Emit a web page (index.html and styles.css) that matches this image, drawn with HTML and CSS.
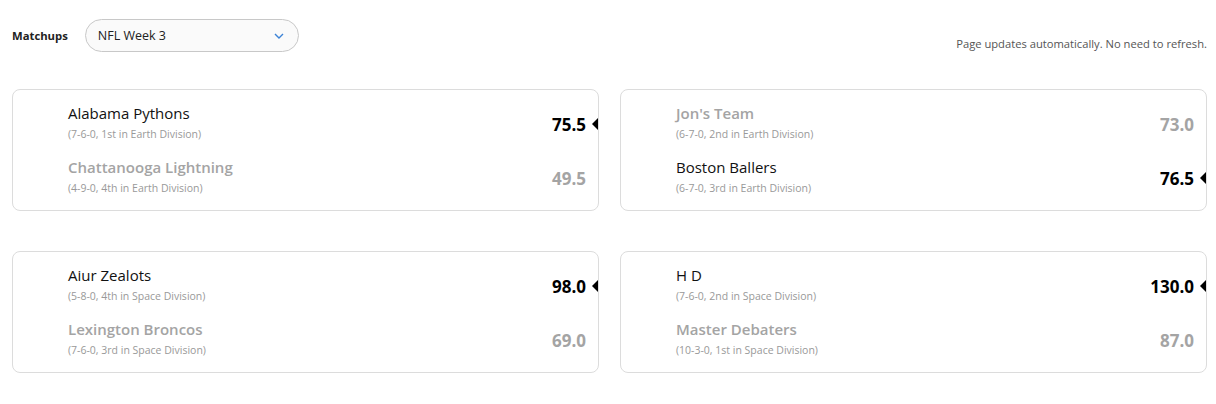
FILE: index.html
```html
<!DOCTYPE html>
<html>
<head>
<meta charset="utf-8">
<link rel="stylesheet" href="styles.css">
</head>
<body>
<div class="page">
  <div class="header">
    <div class="picker">
      <span class="label">Matchups</span>
      <div class="select">
        <span>NFL Week 3</span>
        <svg class="chev" width="10" height="6" viewBox="0 0 10 6"><path d="M1 1 L5 5 L9 1" fill="none" stroke="#3b82d6" stroke-width="1.4"/></svg>
      </div>
    </div>
    <div class="notice">Page updates automatically. No need to refresh.</div>
  </div>
  <div class="grid">
    <div class="card">
      <div class="team win">
        <div class="info"><div class="name">Alabama Pythons</div><div class="rec">(7-6-0, 1st in Earth Division)</div></div>
        <div class="score">75.5</div><div class="arrow"></div>
      </div>
      <div class="team">
        <div class="info"><div class="name">Chattanooga Lightning</div><div class="rec">(4-9-0, 4th in Earth Division)</div></div>
        <div class="score">49.5</div><div class="arrow"></div>
      </div>
    </div>
    <div class="card">
      <div class="team">
        <div class="info"><div class="name">Jon's Team</div><div class="rec">(6-7-0, 2nd in Earth Division)</div></div>
        <div class="score">73.0</div><div class="arrow"></div>
      </div>
      <div class="team win">
        <div class="info"><div class="name">Boston Ballers</div><div class="rec">(6-7-0, 3rd in Earth Division)</div></div>
        <div class="score">76.5</div><div class="arrow"></div>
      </div>
    </div>
    <div class="card">
      <div class="team win">
        <div class="info"><div class="name">Aiur Zealots</div><div class="rec">(5-8-0, 4th in Space Division)</div></div>
        <div class="score">98.0</div><div class="arrow"></div>
      </div>
      <div class="team">
        <div class="info"><div class="name">Lexington Broncos</div><div class="rec">(7-6-0, 3rd in Space Division)</div></div>
        <div class="score">69.0</div><div class="arrow"></div>
      </div>
    </div>
    <div class="card">
      <div class="team win">
        <div class="info"><div class="name">H D</div><div class="rec">(7-6-0, 2nd in Space Division)</div></div>
        <div class="score">130.0</div><div class="arrow"></div>
      </div>
      <div class="team">
        <div class="info"><div class="name">Master Debaters</div><div class="rec">(10-3-0, 1st in Space Division)</div></div>
        <div class="score">87.0</div><div class="arrow"></div>
      </div>
    </div>
  </div>
</div>
</body>
</html>
```
FILE: styles.css
```css
html, body { margin: 0; padding: 0; background: #fff; }
body { font-family: "Open Sans", "Noto Sans", sans-serif; color: #111; }
.page { padding: 19px 9px 0 12px; }
.header { display: flex; justify-content: space-between; align-items: flex-end; }
.picker { display: flex; align-items: center; gap: 17px; }
.label { font-size: 11.3px; font-weight: 700; color: #222; }
.select {
  width: 214px; height: 33px; box-sizing: border-box;
  border: 1px solid #c8c8c8; border-radius: 17px; background: #fafafa;
  display: flex; align-items: center; justify-content: space-between;
  padding: 0 14px 0 12px; font-size: 12.5px; color: #222;
}
.chev { display: block; }
.notice { font-size: 11.2px; color: #555; margin-bottom: 1px; }
.grid {
  margin-top: 37px;
  display: grid; grid-template-columns: 1fr 1fr; column-gap: 21px; row-gap: 40px;
}
.card {
  border: 1px solid #dcdcdc; border-radius: 8px;
  padding: 13px 0 14px 55px;
  display: flex; flex-direction: column; gap: 15px;
}
.team { display: flex; align-items: center; }
.info { flex: 1; }
.name { font-size: 15px; font-weight: 600; line-height: 20px; color: #a4a4a4; }
.rec { font-size: 10.5px; line-height: 16px; margin-top: 3px; color: #999; }
.score { font-size: 17px; font-weight: 700; color: #a4a4a4; margin-top: 3px; }
.arrow { width: 6px; height: 12px; margin-left: 6px; margin-top: 3px; }
.win .name { color: #111; font-weight: 500; }
.win .score { color: #000; }
.win .arrow {
  width: 0; height: 0; border-top: 6px solid transparent; border-bottom: 6px solid transparent;
  border-right: 6px solid #000;
}
```
